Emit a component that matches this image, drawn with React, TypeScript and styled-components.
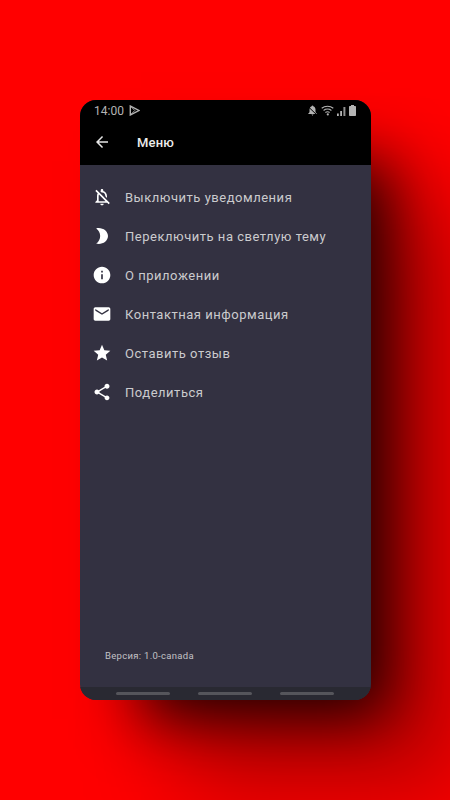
import React from "react";
import styled, { createGlobalStyle } from "styled-components";
import { MdArrowBack, MdInfo, MdMail, MdOutlineNotificationsOff, MdShare, MdStar } from "react-icons/md";

const GlobalStyle = createGlobalStyle`
  html, body {
    margin: 0;
    padding: 0;
    background: #ff0000;
    font-family: Roboto, "Noto Sans", sans-serif;
  }
`;

const Page = styled.div`
  width: 450px;
  height: 800px;
  overflow: hidden;
  box-sizing: border-box;
  padding: 100px 79px 100px 80px;
  background: #ff0000;
`;

const Phone = styled.div`
  width: 291px;
  height: 600px;
  display: flex;
  flex-direction: column;
  border-radius: 16px;
  background: #333141;
  box-shadow: 40px 40px 60px -21px rgba(0, 0, 0, 0.85), 100px 100px 100px rgba(0, 0, 0, 0.25);
  overflow: hidden;
`;

const Header = styled.header`
  height: 65px;
  flex: none;
  background: #000;
  display: flex;
  flex-direction: column;
`;

const StatusBar = styled.div`
  height: 21px;
  padding: 0 15px 0 14px;
  display: flex;
  align-items: center;
  justify-content: space-between;
  color: #b4b4b4;
  font-size: 12px;
`;

const StatusGroup = styled.div<{ $gap: number }>`
  display: flex;
  align-items: center;
  gap: ${(p) => p.$gap}px;
`;

const Toolbar = styled.div`
  flex: 1;
  display: flex;
  align-items: center;
  padding: 0 0 2px 13px;
  color: #e6e6e6;
`;

const Title = styled.h1`
  margin: 0 0 0 26px;
  font-size: 13px;
  font-weight: 500;
  letter-spacing: 0.2px;
  color: #ececec;
`;

const Menu = styled.ul`
  list-style: none;
  margin: 0;
  padding: 12.5px 0 0;
  flex: 1;
`;

const Row = styled.li`
  height: 39px;
  display: flex;
  align-items: center;
  padding-left: 12px;
  gap: 13px;
  color: #fff;
`;

const RowLabel = styled.span`
  font-size: 13px;
  letter-spacing: 0.52px;
  color: #cbcbce;
`;

const Version = styled.div`
  padding: 0 0 25px 25px;
  font-size: 9.5px;
  letter-spacing: 0.3px;
  line-height: 12px;
  color: #c2c2c6;
`;

const NavBar = styled.div`
  height: 13px;
  flex: none;
  background: #292932;
  display: flex;
  justify-content: center;
  gap: 28px;
  padding: 5px 1px 0 0;
  box-sizing: border-box;
`;

const NavPill = styled.div`
  width: 54px;
  height: 3px;
  border-radius: 2px;
  background: #55555b;
`;

const MoonIcon = ({ size }: { size: number }) => (
  <svg width={size} height={size} viewBox="0 0 24 24" fill="currentColor">
    <path d="M8 2.400c-1 0-2 .2-3 .5 3 2 4.800 5.400 4.800 9.100S8 19.100 5 21.100c1 .3 2 .5 3 .5 6 0 11.200-4.300 11.200-9.600S14 2.400 8 2.400z" />
  </svg>
);

const items = [
  { icon: MdOutlineNotificationsOff, label: "Выключить уведомления" },
  { icon: MoonIcon, label: "Переключить на светлую тему" },
  { icon: MdInfo, label: "О приложении" },
  { icon: MdMail, label: "Контактная информация" },
  { icon: MdStar, label: "Оставить отзыв" },
  { icon: MdShare, label: "Поделиться" },
];

const PlayIcon = () => (
  <svg width="11" height="11" viewBox="0 0 11 11" fill="none" stroke="currentColor" strokeWidth="1.4">
    <path d="M1.300 1v9l8.500-4.500z" />
    <path d="M1.300 1l4.500 4.500-4.500 4.500" strokeWidth="0.9" />
  </svg>
);

const BellOffIcon = () => (
  <svg width="11" height="11" viewBox="0 0 11 11" fill="currentColor">
    <path d="M5.500 0.500c-.5 0-.8.4-.8.8C3.300 1.700 2.500 3 2.500 4.500v2.800L1.300 8.500v.6h8.400v-.6L8.500 7.300V4.500C8.500 3 7.700 1.700 6.300 1.300c0-.4-.3-.8-.8-.8z" />
    <path d="M4.500 9.500h2l-1 1.200z" />
    <path d="M1 1.500l9 8.500" stroke="#000" strokeWidth="1" />
  </svg>
);

const WifiIcon = () => (
  <svg width="13" height="11" viewBox="0 0 13 11" fill="none" stroke="currentColor" strokeWidth="1.100">
    <path d="M0.700 3.300C4 0.600 9 0.600 12.300 3.300" />
    <path d="M2.600 5.500C4.800 3.700 8.200 3.700 10.400 5.500" />
    <path d="M4.400 7.500C5.600 6.600 7.400 6.600 8.600 7.500" />
    <circle cx="6.800" cy="9.400" r="1.100" fill="currentColor" stroke="none" />
  </svg>
);

const SignalIcon = () => (
  <svg width="9" height="10" viewBox="0 0 9 10" fill="currentColor">
    <path d="M0 7.500h1.800V10H0zM3.200 5h1.800v5H3.200z" />
    <path d="M6.400 1h2v9h-2z" opacity="0.8" />
  </svg>
);

const BatteryIcon = () => (
  <svg width="7" height="11" viewBox="0 0 7 11" fill="currentColor">
    <path d="M2 0h3v1h1.200q.8 0 .8.8v8.400q0 .8-.8.8H.8q-.8 0-.8-.8V1.800q0-.8.8-.8H2z" />
  </svg>
);

export default function App() {
  return (
    <Page>
      <GlobalStyle />
      <Phone>
        <Header>
          <StatusBar>
            <StatusGroup $gap={5}>
              <span>14:00</span>
              <PlayIcon />
            </StatusGroup>
            <StatusGroup $gap={3}>
              <BellOffIcon />
              <WifiIcon />
              <SignalIcon />
              <BatteryIcon />
            </StatusGroup>
          </StatusBar>
          <Toolbar>
            <MdArrowBack size={18} />
            <Title>Меню</Title>
          </Toolbar>
        </Header>
        <Menu>
          {items.map(({ icon: Icon, label }) => (
            <Row key={label}>
              <Icon size={20} />
              <RowLabel>{label}</RowLabel>
            </Row>
          ))}
        </Menu>
        <Version>Версия: 1.0-canada</Version>
        <NavBar>
          <NavPill />
          <NavPill />
          <NavPill />
        </NavBar>
      </Phone>
    </Page>
  );
}
